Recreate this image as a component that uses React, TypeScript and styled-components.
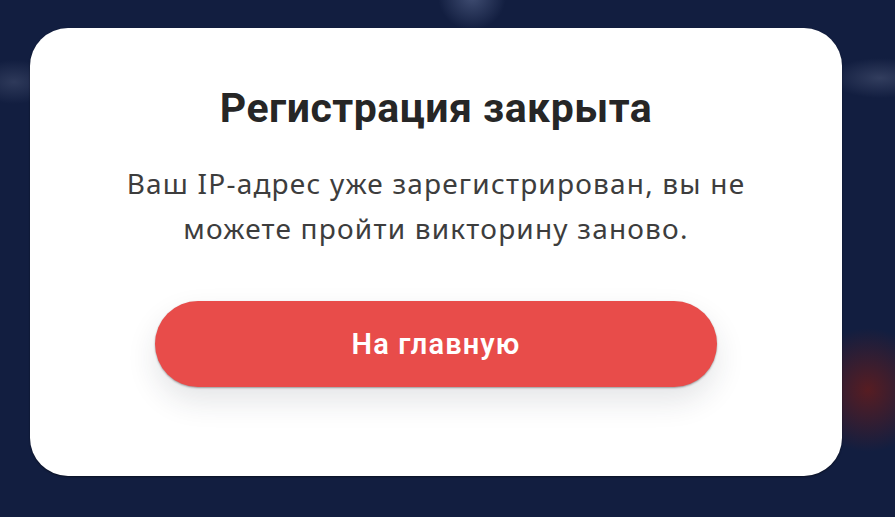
import React from 'react'
import styled, { createGlobalStyle } from 'styled-components'

const GlobalStyle = createGlobalStyle`
  html, body {
    margin: 0;
    padding: 0;
    background: #121e40;
  }
  * {
    box-sizing: border-box;
  }
`

const Page = styled.div`
  width: 100vw;
  height: 100vh;
  overflow: hidden;
  display: flex;
  align-items: flex-start;
  padding: 28px 0 0 30px;
  background:
    radial-gradient(circle at 472px -4px, rgba(120, 135, 175, 0.45) 0, rgba(18, 30, 64, 0) 34px),
    radial-gradient(ellipse 40px 22px at 14px 82px, rgba(110, 120, 150, 0.3), rgba(18, 30, 64, 0)),
    radial-gradient(ellipse 50px 20px at 880px 78px, rgba(110, 120, 150, 0.35), rgba(18, 30, 64, 0)),
    radial-gradient(circle at 868px 390px, rgba(110, 28, 24, 0.75) 0, rgba(18, 30, 64, 0) 62px),
    #121e40;
  font-family: Roboto, 'Noto Sans', sans-serif;
`

const Card = styled.section`
  width: 812px;
  height: 448px;
  background: #ffffff;
  border-radius: 38px;
  box-shadow: 0 1px 2px rgba(0, 0, 0, 0.45);
  display: flex;
  flex-direction: column;
  align-items: center;
  padding-top: 56px;
`

const Title = styled.h2`
  margin: 0;
  font-size: 41px;
  line-height: 48px;
  font-weight: 700;
  letter-spacing: 0.5px;
  color: #262626;
`

const Message = styled.p`
  margin: 29px 0 0;
  width: 660px;
  text-align: center;
  font-family: 'Noto Sans', Roboto, sans-serif;
  font-size: 28px;
  line-height: 45px;
  letter-spacing: 1.2px;
  color: #3d3d3d;
`

const HomeButton = styled.button`
  margin-top: 50px;
  width: 562px;
  height: 86px;
  border: none;
  border-radius: 43px;
  background: #e84c4a;
  color: #ffffff;
  font-family: inherit;
  font-size: 29px;
  font-weight: 600;
  letter-spacing: 1.1px;
  cursor: pointer;
  box-shadow: 0 14px 30px rgba(30, 40, 60, 0.12), 0 1px 2px rgba(0, 0, 0, 0.35);
`

const App: React.FC = () => {
  return (
    <>
      <GlobalStyle />
      <Page>
        <Card>
          <Title>Регистрация закрыта</Title>
          <Message>Ваш IP-адрес уже зарегистрирован, вы не можете пройти викторину заново.</Message>
          <HomeButton type="button">На главную</HomeButton>
        </Card>
      </Page>
    </>
  )
}

export default App
